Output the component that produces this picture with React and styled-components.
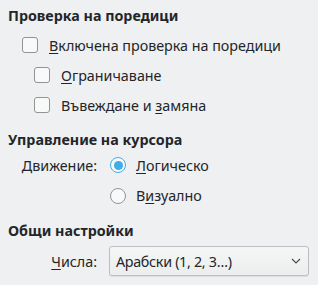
import React from "react";
import styled, { createGlobalStyle } from "styled-components";

const Global = createGlobalStyle`
  html, body { margin: 0; padding: 0; background: #eff0f1; }
  body { font-family: "Noto Sans", "DejaVu Sans", sans-serif; color: #232629; font-size: 14.3px; }
`;

const Page = styled.div`
  width: 318px;
  height: 285px;
  padding: 0 10px 0 8px;
  box-sizing: border-box;
  display: flex;
  flex-direction: column;
`;

const Heading = styled.div`
  font-weight: bold;
  height: ${(p) => p.$h || 22}px;
  margin-top: ${(p) => p.$mt || 0}px;
  display: flex;
  align-items: center;
`;

const CheckRow = styled.label`
  display: flex;
  align-items: center;
  height: 30px;
  padding-left: ${(p) => p.$indent}px;
  gap: 11px;
`;

const Box = styled.span`
  width: 14px;
  height: 14px;
  border: 1px solid #919395;
  border-radius: 3px;
  background: #f8f9f9;
  flex: none;
`;

const U = styled.span`
  text-decoration: underline;
  text-underline-offset: 2px;
`;

const FormRow = styled.div`
  display: grid;
  grid-template-columns: 89px 1fr;
  column-gap: 12px;
  align-items: center;
  height: ${(p) => p.$h || 30}px;
`;

const Label = styled.span`
  text-align: right;
`;

const RadioRow = styled.div`
  display: flex;
  align-items: center;
  gap: 10px;
  padding-left: 1px;
`;

const Radio = styled.span`
  width: 16px;
  height: 16px;
  border-radius: 50%;
  box-sizing: border-box;
  flex: none;
  border: ${(p) => (p.$on ? "1.5px solid #3daee9" : "1px solid #919395")};
  background: #f8f9f9;
  display: flex;
  align-items: center;
  justify-content: center;
  &::after {
    content: "";
    width: 9px;
    height: 9px;
    border-radius: 50%;
    background: #3daee9;
    display: ${(p) => (p.$on ? "block" : "none")};
  }
`;

const Combo = styled.div`
  width: 200px;
  height: 30px;
  box-sizing: border-box;
  border: 1px solid #bcbebf;
  border-radius: 3px;
  background: linear-gradient(#f5f6f6, #eceded);
  box-shadow: 0 1px 1px rgba(0, 0, 0, 0.08);
  display: flex;
  align-items: center;
  justify-content: space-between;
  padding: 0 7px 0 6px;
`;

const ComboText = styled.span`
  letter-spacing: -0.3px;
`;

export default function App() {
  return (
    <>
      <Global />
      <Page>
        <Heading $h={30}>Проверка на поредици</Heading>
        <CheckRow $indent={14}>
          <Box />
          <span><U>В</U>ключена проверка на поредици</span>
        </CheckRow>
        <CheckRow $indent={26}>
          <Box />
          <span><U>О</U>граничаване</span>
        </CheckRow>
        <CheckRow $indent={26}>
          <Box />
          <span>Въвеждане и <U>з</U>амяна</span>
        </CheckRow>
        <Heading $mt={8}>Управление на курсора</Heading>
        <FormRow>
          <Label>Движение:</Label>
          <RadioRow>
            <Radio $on />
            <span><U>Л</U>огическо</span>
          </RadioRow>
        </FormRow>
        <FormRow $h={31}>
          <span />
          <RadioRow>
            <Radio />
            <span>В<U>и</U>зуално</span>
          </RadioRow>
        </FormRow>
        <Heading $mt={8}>Общи настройки</Heading>
        <FormRow $h={40}>
          <Label><U>Ч</U>исла:</Label>
          <Combo>
            <ComboText>Арабски (1, 2, 3…)</ComboText>
            <svg width="10" height="6" viewBox="0 0 10 6">
              <path d="M1 1 L5 5 L9 1" fill="none" stroke="#4d4f51" strokeWidth="1.2" />
            </svg>
          </Combo>
        </FormRow>
      </Page>
    </>
  );
}
